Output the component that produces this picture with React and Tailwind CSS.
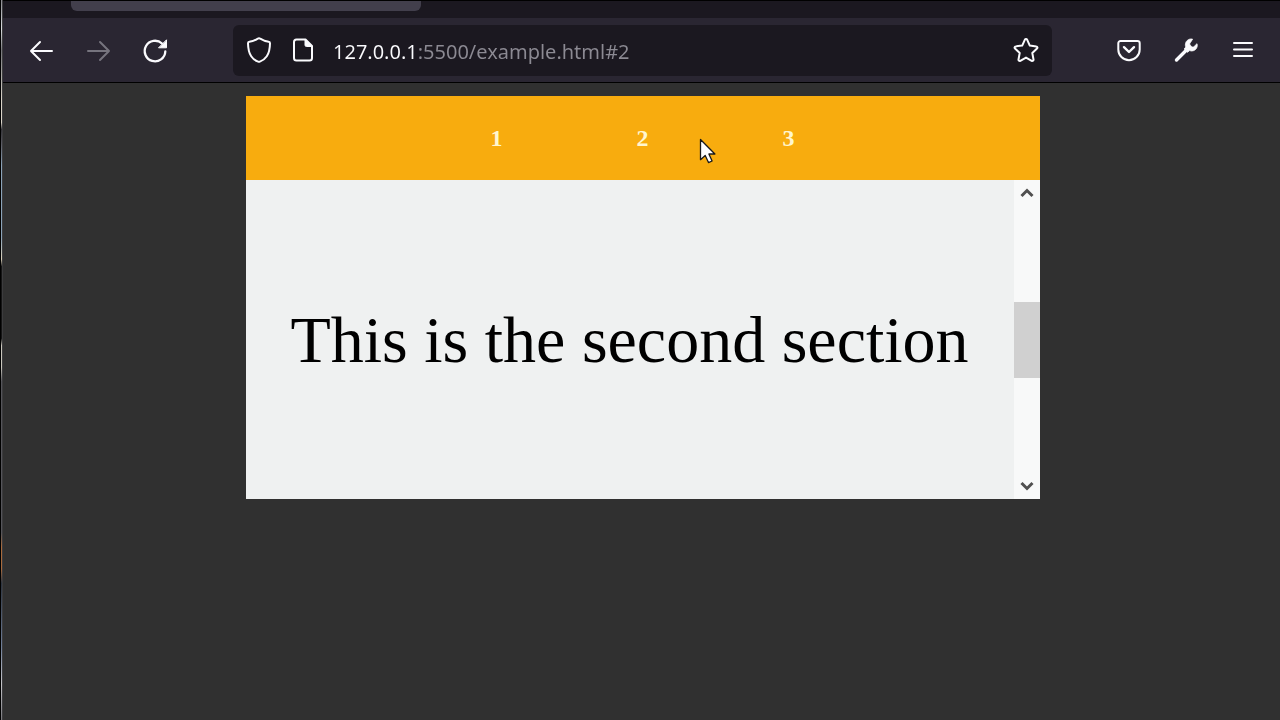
import React from 'react';

const BackIcon = () => (
  <svg width="28" height="28" viewBox="0 0 28 28" fill="none" stroke="currentColor" strokeWidth="2" strokeLinecap="round" strokeLinejoin="round">
    <path d="M25 15H4M13 6L4 15l9 9" />
  </svg>
);

const ForwardIcon = () => (
  <svg width="28" height="28" viewBox="0 0 28 28" fill="none" stroke="currentColor" strokeWidth="2" strokeLinecap="round" strokeLinejoin="round">
    <path d="M4 15h21M16 6l9 9-9 9" />
  </svg>
);

const ReloadIcon = () => (
  <svg width="28" height="28" viewBox="0 0 28 28" fill="none" stroke="currentColor" strokeWidth="2.3" strokeLinecap="round">
    <path d="M24.300 15.500A10.300 10.300 0 1 1 21 7.500" />
    <path d="M25.500 4.200v7.600h-7.600z" fill="currentColor" strokeWidth="1" strokeLinejoin="round" />
  </svg>
);

const ShieldIcon = () => (
  <svg width="28" height="28" viewBox="0 0 28 28" fill="none" stroke="currentColor" strokeWidth="2" strokeLinejoin="round">
    <path d="M14 2.2c.5 0 .8.1 1.200.4C17.500 4 20.500 5.200 23.700 5.700c.8.1 1.300.8 1.300 1.600-.1 5-.9 9.700-3.200 13-1.900 2.800-4.700 4.600-6.900 5.300-.6.200-1.200.2-1.800 0-2.200-.7-5-2.500-6.900-5.300C3.900 17 3.100 12.300 3 7.300c0-.8.5-1.500 1.300-1.600C7.500 5.200 10.500 4 12.800 2.600c.4-.3.700-.4 1.200-.4z" />
  </svg>
);

const PageIcon = () => (
  <svg width="28" height="28" viewBox="0 0 28 28" fill="none" stroke="currentColor" strokeWidth="2" strokeLinejoin="round">
    <path d="M16.500 3.500H7.500a2.500 2.500 0 0 0-2.500 2.500v16a2.500 2.500 0 0 0 2.500 2.500h13a2.500 2.500 0 0 0 2.500-2.500V10z" />
    <path d="M16 3.500V9a1.500 1.500 0 0 0 1.500 1.500H23z" fill="currentColor" strokeWidth="1" />
  </svg>
);

const StarIcon = () => (
  <svg width="28" height="28" viewBox="0 0 28 28" fill="none" stroke="currentColor" strokeWidth="2" strokeLinejoin="round">
    <path d="M12.900 3.700c.4-.9 1.800-.9 2.200 0l2.700 5.900 6.500.8c1.100.1 1.500 1.400.7 2.100l-4.700 4.500 1.200 6.500c.2 1-.9 1.800-1.800 1.300L14 21.600l-5.700 3.200c-.9.5-2-.3-1.800-1.300l1.200-6.500L3 12.500c-.8-.7-.4-2 .7-2.100l6.500-.8z" />
  </svg>
);

const PocketIcon = () => (
  <svg width="28" height="28" viewBox="0 0 28 28" fill="none" stroke="currentColor" strokeWidth="2" strokeLinecap="round" strokeLinejoin="round">
    <path d="M5.500 5h17A2.200 2.200 0 0 1 24.700 7.200v6.300a10.700 10.700 0 0 1-21.400 0V7.200A2.200 2.200 0 0 1 5.500 5z" />
    <path d="M9 11.200l5 4.800 5-4.800" strokeWidth="2.400" />
  </svg>
);

const WrenchIcon = () => (
  <svg width="28" height="28" viewBox="0 0 28 28" fill="none" stroke="currentColor">
    <path d="M4.500 24L15 13.500" strokeWidth="3.400" strokeLinecap="round" />
    <path
      d="M20.600 3.200c-2.900-.9-6.400 1-7.100 4.300-.3 1.300-.2 2.400.3 3.500l-1.600 2 3.300 3.300 2.100-1.700c1.200.5 2.500.5 3.800.1 2.900-.9 4.500-4.100 3.600-7l-2.900 2.800c-.8.7-1.800.7-2.500 0l-1.300-1.300c-.7-.8-.7-1.800 0-2.500z"
      fill="currentColor"
      strokeWidth="0.8"
      strokeLinejoin="round"
    />
  </svg>
);

const MenuIcon = () => (
  <svg width="28" height="28" viewBox="0 0 28 28" fill="none" stroke="currentColor" strokeWidth="2" strokeLinecap="round">
    <path d="M5 7h18M5 13.500h18M5 20h18" />
  </svg>
);

const ToolbarButton = ({ label, disabled, children }) => (
  <button
    type="button"
    aria-label={label}
    disabled={disabled}
    className="flex h-12 w-[57px] items-center justify-center text-[#fbfbfe] disabled:text-[#76747e]"
  >
    {children}
  </button>
);

const ScrollArrow = ({ label, d }) => (
  <button type="button" aria-label={label} className="flex h-[26px] w-full items-center justify-center text-[#505050]">
    <svg width="16" height="16" viewBox="0 0 16 16" fill="none" stroke="currentColor" strokeWidth="3">
      <path d={d} />
    </svg>
  </button>
);

const sections = [1, 2, 3];

const App = () => {
  return (
    <div className="flex min-h-screen bg-[#303030]">
      {/* sliver of the desktop behind the window */}
      <div className="flex w-[3px] shrink-0 bg-black">
        <div className="ml-px w-px bg-[linear-gradient(180deg,#8a8a90_0%,#d8dade_4%,#77777c_7%,#d9d4c8_14%,#d9d4c8_17%,#333338_18%,#5c5c64_20%,#8ba3b8_23%,#8ba3b8_33%,#d8cfb8_36%,#161616_37%,#161616_47%,#c9c6bc_48%,#c9c6bc_51%,#55555a_53%,#55555a_74%,#a86a3c_76%,#a86a3c_79%,#2c3440_81%,#71809a_90%,#c4c4c8_95%,#77777c_100%)]" />
        <div className="w-px bg-[#3c3c3e]" />
      </div>

      <div className="flex min-w-0 flex-1 flex-col">
        {/* Tab strip */}
        <div className="flex h-[18px] items-start border-t border-black bg-[#1b1820] pl-[68px]">
          <div className="h-[10px] w-[350px] rounded-b-md bg-[#423f4c]" />
        </div>

        {/* Toolbar */}
        <header className="flex h-[65px] items-center border-b border-black bg-[#2a2632] px-[9px]">
          <ToolbarButton label="Back"><BackIcon /></ToolbarButton>
          <ToolbarButton label="Forward" disabled><ForwardIcon /></ToolbarButton>
          <ToolbarButton label="Reload"><ReloadIcon /></ToolbarButton>

          <div className="mr-12 ml-[50px] flex h-[51px] min-w-0 flex-1 items-center rounded-md bg-[#1b1820] px-3 text-[#fbfbfe]">
            <ShieldIcon />
            <span className="ml-4"><PageIcon /></span>
            <input
              type="text"
              aria-label="Address"
              defaultValue="127.0.0.1:5500/example.html#2"
              className="ml-4 min-w-0 flex-1 bg-[linear-gradient(90deg,#fbfbfe_84px,#8c8a93_84px)] bg-clip-text pt-1 font-['Noto_Sans',sans-serif] text-[20px] leading-7 text-transparent caret-white outline-none"
            />
            <button type="button" aria-label="Bookmark this page"><StarIcon /></button>
          </div>

          <ToolbarButton label="Save to Pocket"><PocketIcon /></ToolbarButton>
          <ToolbarButton label="Developer tools"><WrenchIcon /></ToolbarButton>
          <ToolbarButton label="Menu"><MenuIcon /></ToolbarButton>
        </header>

        {/* Page */}
        <main className="pt-[13px] pr-4 pl-[18px] font-['Liberation_Serif',serif]">
          <div className="mx-auto w-full max-w-[794px]">
            <nav className="relative flex h-[84px] items-center justify-center bg-[#f8ac0e]">
              {sections.map((n) => (
                <a key={n} href={`#${n}`} className="w-[146px] text-center text-[24px] leading-8 font-bold text-[#fff6cf]">
                  {n}
                </a>
              ))}
              {/* mouse pointer */}
              <svg className="absolute top-[42px] left-[453px]" width="18" height="26" viewBox="0 0 18 26">
                <path
                  d="M1.500 1.500v20.200l4.700-4.300 3.300 7.200 3.600-1.600-3.200-7h6z"
                  fill="#ffffff"
                  stroke="#1a1a1a"
                  strokeWidth="1.300"
                  strokeLinejoin="round"
                />
              </svg>
            </nav>

            <div className="flex h-[319px] bg-[#eff1f1]">
              <section id="2" className="flex min-w-0 flex-1 items-center justify-center">
                <h1 className="text-center text-[66px] leading-[66px] text-black">This is the second section</h1>
              </section>
              <div className="flex w-[26px] flex-col items-center justify-between bg-[#f8f9f9]">
                <ScrollArrow label="Scroll up" d="M2.500 11L8 5.500l5.500 5.500" />
                <div className="h-[76px] w-full bg-[#d0d0d0]" />
                <ScrollArrow label="Scroll down" d="M2.500 5L8 10.500 13.500 5" />
              </div>
            </div>
          </div>
        </main>
      </div>
    </div>
  );
};

export default App;
